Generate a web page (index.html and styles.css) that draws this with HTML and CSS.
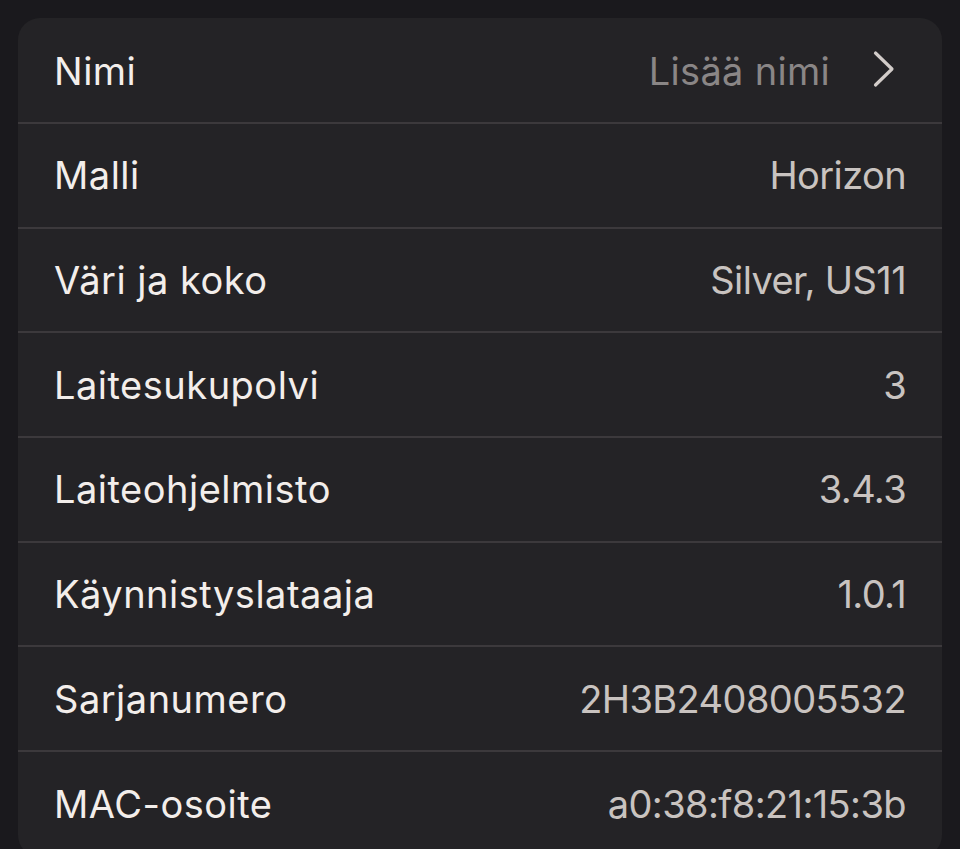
FILE: index.html
```html
<!DOCTYPE html>
<html lang="fi">
<head>
<meta charset="utf-8">
<link rel="stylesheet" href="styles.css">
</head>
<body>
<div class="card">
  <div class="row">
    <span class="label">Nimi</span>
    <span class="value-group">
      <span class="placeholder">Lisää nimi</span>
      <svg class="chevron" width="24" height="38" viewBox="0 0 24 38"><path d="M3.5 3 L20 19 L3.5 35" fill="none" stroke="#d2ccc9" stroke-width="3.2" stroke-linecap="round" stroke-linejoin="round"/></svg>
    </span>
  </div>
  <div class="row"><span class="label">Malli</span><span class="value">Horizon</span></div>
  <div class="row"><span class="label">Väri ja koko</span><span class="value">Silver, US11</span></div>
  <div class="row"><span class="label">Laitesukupolvi</span><span class="value">3</span></div>
  <div class="row"><span class="label">Laiteohjelmisto</span><span class="value">3.4.3</span></div>
  <div class="row"><span class="label">Käynnistyslataaja</span><span class="value">1.0.1</span></div>
  <div class="row"><span class="label">Sarjanumero</span><span class="value">2H3B2408005532</span></div>
  <div class="row"><span class="label">MAC-osoite</span><span class="value">a0:38:f8:21:15:3b</span></div>
</div>
</body>
</html>
```
FILE: styles.css
```css
html, body {
  margin: 0;
  padding: 0;
  background: #1a191d;
  height: 849px;
  overflow: hidden;
}
body {
  padding: 18px 18px 0 18px;
  box-sizing: border-box;
  font-family: Inter, "Noto Sans", sans-serif;
}
.card {
  background: #242326;
  border-radius: 22px;
  overflow: hidden;
  padding-top: 1.5px;
}
.row {
  height: 104.67px;
  box-sizing: border-box;
  border-bottom: 2px solid #3c393c;
  display: flex;
  align-items: center;
  justify-content: space-between;
  padding: 0 36px;
}
.row:last-child {
  border-bottom: none;
}
.label {
  color: #f3eeeb;
  font-size: 38px;
  letter-spacing: 0.5px;
}
.value {
  color: #c9c3c0;
  font-size: 38px;
  letter-spacing: -0.6px;
  font-variant-numeric: proportional-nums;
}
.value-group {
  display: flex;
  align-items: center;
  gap: 42px;
  margin-right: 10px;
}
.placeholder {
  color: #8a8686;
  font-size: 38px;
  letter-spacing: 0.3px;
}
.chevron {
  display: block;
  margin-top: -3px;
}
```
